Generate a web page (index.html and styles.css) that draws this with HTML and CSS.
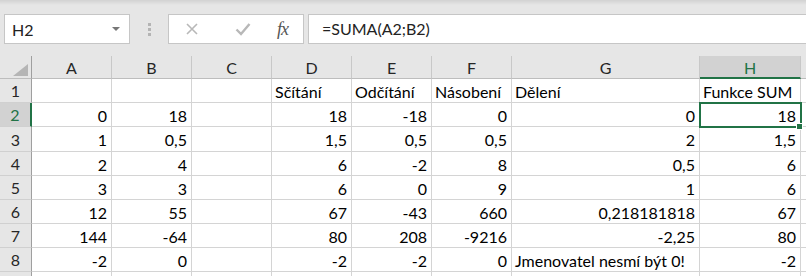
FILE: index.html
```html
<!DOCTYPE html>
<html lang="cs">
<head>
    <meta charset="UTF-8">
    <title>Sešit1 - Excel</title>
    <link rel="stylesheet" href="styles.css">
</head>
<body>
    <div class="formula-bar">
        <div class="name-box">
            <span class="name-text">H2</span>
            <span class="name-arrow"></span>
        </div>
        <div class="grip">
            <span></span><span></span><span></span>
        </div>
        <div class="fx-box">
            <svg class="fx-icon" width="14" height="14" viewBox="0 0 14 14">
                <path d="M2 2 L12 12 M12 2 L2 12" stroke="#b8b8b8" stroke-width="1.6" fill="none"/>
            </svg>
            <svg class="fx-icon" width="16" height="14" viewBox="0 0 16 14">
                <path d="M1.5 7.5 L6 12 L14.5 2" stroke="#b8b8b8" stroke-width="2.4" fill="none"/>
            </svg>
            <span class="fx-label">fx</span>
        </div>
        <div class="formula-input">=SUMA(A2;B2)</div>
    </div>

    <div class="sheet">
        <div class="hdr corner"><span class="corner-tri"></span></div>
        <div class="hdr col">A</div>
        <div class="hdr col">B</div>
        <div class="hdr col">C</div>
        <div class="hdr col">D</div>
        <div class="hdr col">E</div>
        <div class="hdr col">F</div>
        <div class="hdr col">G</div>
        <div class="hdr col selected">H</div>
        <div class="hdr col"></div>

        <div class="hdr row">1</div>
        <div class="cell"></div>
        <div class="cell"></div>
        <div class="cell"></div>
        <div class="cell text">Sčítání</div>
        <div class="cell text">Odčítání</div>
        <div class="cell text">Násobení</div>
        <div class="cell text">Dělení</div>
        <div class="cell text">Funkce SUM</div>
        <div class="cell"></div>

        <div class="hdr row selected">2</div>
        <div class="cell">0</div>
        <div class="cell">18</div>
        <div class="cell"></div>
        <div class="cell">18</div>
        <div class="cell">-18</div>
        <div class="cell">0</div>
        <div class="cell">0</div>
        <div class="cell active">18<span class="fill-handle"></span></div>
        <div class="cell"></div>

        <div class="hdr row">3</div>
        <div class="cell">1</div>
        <div class="cell">0,5</div>
        <div class="cell"></div>
        <div class="cell">1,5</div>
        <div class="cell">0,5</div>
        <div class="cell">0,5</div>
        <div class="cell">2</div>
        <div class="cell">1,5</div>
        <div class="cell"></div>

        <div class="hdr row">4</div>
        <div class="cell">2</div>
        <div class="cell">4</div>
        <div class="cell"></div>
        <div class="cell">6</div>
        <div class="cell">-2</div>
        <div class="cell">8</div>
        <div class="cell">0,5</div>
        <div class="cell">6</div>
        <div class="cell"></div>

        <div class="hdr row">5</div>
        <div class="cell">3</div>
        <div class="cell">3</div>
        <div class="cell"></div>
        <div class="cell">6</div>
        <div class="cell">0</div>
        <div class="cell">9</div>
        <div class="cell">1</div>
        <div class="cell">6</div>
        <div class="cell"></div>

        <div class="hdr row">6</div>
        <div class="cell">12</div>
        <div class="cell">55</div>
        <div class="cell"></div>
        <div class="cell">67</div>
        <div class="cell">-43</div>
        <div class="cell">660</div>
        <div class="cell">0,218181818</div>
        <div class="cell">67</div>
        <div class="cell"></div>

        <div class="hdr row">7</div>
        <div class="cell">144</div>
        <div class="cell">-64</div>
        <div class="cell"></div>
        <div class="cell">80</div>
        <div class="cell">208</div>
        <div class="cell">-9216</div>
        <div class="cell">-2,25</div>
        <div class="cell">80</div>
        <div class="cell"></div>

        <div class="hdr row">8</div>
        <div class="cell">-2</div>
        <div class="cell">0</div>
        <div class="cell"></div>
        <div class="cell">-2</div>
        <div class="cell">-2</div>
        <div class="cell">0</div>
        <div class="cell text">Jmenovatel nesmí být 0!</div>
        <div class="cell">-2</div>
        <div class="cell"></div>

        <div class="hdr row"></div>
        <div class="cell"></div>
        <div class="cell"></div>
        <div class="cell"></div>
        <div class="cell"></div>
        <div class="cell"></div>
        <div class="cell"></div>
        <div class="cell"></div>
        <div class="cell"></div>
        <div class="cell"></div>
    </div>
</body>
</html>
```

FILE: styles.css
```css
body {
    margin: 0;
    width: 806px;
    height: 276px;
    overflow: hidden;
    background: #ffffff;
    font-family: Lato, "Liberation Sans", sans-serif;
    font-size: 16px;
    color: #000000;
}

/* formula bar */
.formula-bar {
    height: 56px;
    box-sizing: border-box;
    padding: 14px 0 0 4px;
    display: flex;
    align-items: flex-start;
    background: linear-gradient(#d2d2d2 0px, #e6e6e6 5px, #e6e6e6 100%);
}

.name-box {
    width: 126px;
    height: 30px;
    box-sizing: border-box;
    border: 1px solid #c6c6c6;
    background: #ffffff;
    display: flex;
    align-items: center;
    justify-content: space-between;
    padding: 0 9px 0 7px;
}

.name-text {
    color: #222222;
}

.name-arrow {
    width: 0;
    height: 0;
    border-left: 4px solid transparent;
    border-right: 4px solid transparent;
    border-top: 4px solid #777777;
}

.grip {
    width: 38px;
    display: flex;
    flex-direction: column;
    align-items: center;
    gap: 2px;
    padding-top: 9px;
}

.grip span {
    width: 3px;
    height: 3px;
    background: #b4b4b4;
}

.fx-box {
    width: 136px;
    height: 30px;
    box-sizing: border-box;
    border: 1px solid #c6c6c6;
    background: #ffffff;
    display: flex;
    align-items: center;
    padding: 0 0 0 16px;
}

.fx-icon:first-child {
    margin-right: 36px;
}

.fx-icon + .fx-icon {
    margin-right: 26px;
}

.fx-label {
    font-family: "Liberation Serif", serif;
    font-style: italic;
    font-size: 18px;
    color: #555555;
    letter-spacing: -1px;
}

.formula-input {
    flex: 1;
    height: 30px;
    box-sizing: border-box;
    margin-left: 4px;
    border: 1px solid #c6c6c6;
    border-right: none;
    background: #ffffff;
    padding: 4px 0 0 13px;
    color: #222222;
}

/* grid */
.sheet {
    display: grid;
    grid-template-columns: 32px 80px 80px 80px 80px 80px 80px 188px 101px 1fr;
    grid-template-rows: 23px 24px 24px 25px repeat(5, 24px) 6px;
}

.hdr {
    background: #e6e6e6;
    box-sizing: border-box;
    border-right: 1px solid #c8c8c8;
    border-bottom: 1px solid #bdbdbd;
    color: #262626;
    display: flex;
    align-items: center;
    justify-content: center;
}

.hdr.col {
    padding-top: 1px;
}

.hdr.row {
    border-right: 1px solid #9f9f9f;
    border-bottom-color: #d0d0d0;
}

.hdr.selected {
    background: #d2d2d2;
    color: #217346;
}

.hdr.col.selected {
    border-bottom: 2px solid #217346;
}

.hdr.row.selected {
    border-right: 2px solid #217346;
}

.corner {
    position: relative;
    border-right: 1px solid #9f9f9f;
}

.corner-tri {
    position: absolute;
    right: 3px;
    bottom: 2px;
    width: 0;
    height: 0;
    border-left: 15px solid transparent;
    border-bottom: 12px solid #b5b5b5;
}

.cell {
    box-sizing: border-box;
    border-right: 1px solid #d4d4d4;
    border-bottom: 1px solid #d4d4d4;
    display: flex;
    align-items: center;
    justify-content: flex-end;
    padding: 1px 4px 0 3px;
    white-space: nowrap;
}

.cell.text {
    justify-content: flex-start;
}

.cell.active {
    position: relative;
    outline: 2px solid #217346;
    outline-offset: -1px;
    z-index: 1;
}

.fill-handle {
    position: absolute;
    right: -3px;
    bottom: -4px;
    width: 5px;
    height: 5px;
    background: #217346;
    border: 1px solid #ffffff;
}
```
